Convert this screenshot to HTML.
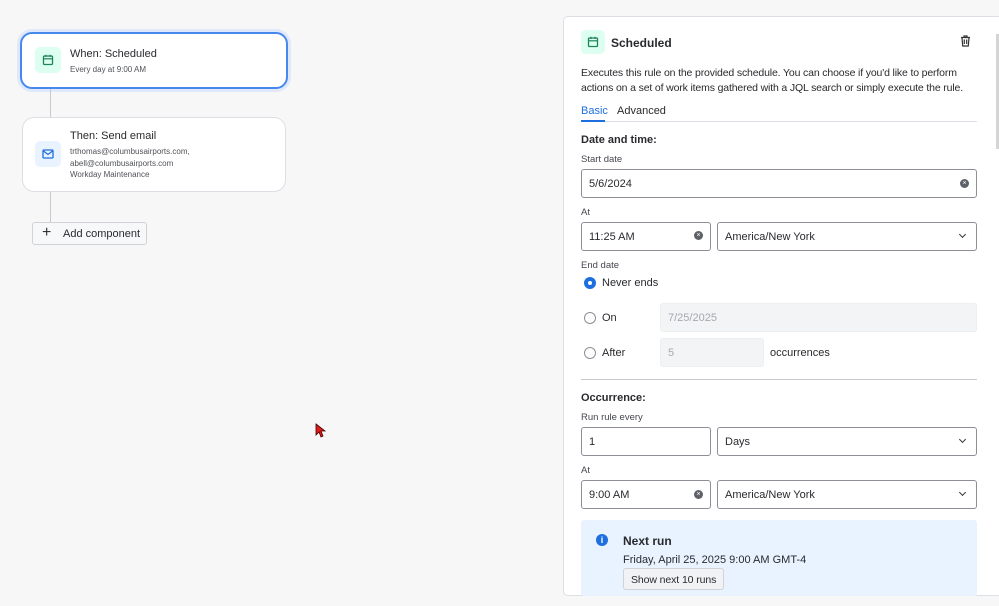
<!DOCTYPE html>
<html><head><style>
*{box-sizing:border-box;margin:0;padding:0}
body{width:999px;height:606px;background:#f7f7f7;font-family:"Liberation Sans",sans-serif;color:#292a2e;position:relative;overflow:hidden;font-size:11px}
div{white-space:nowrap}
.a{position:absolute}
.card{position:absolute;background:#fff;border:1px solid #dcdfe4;border-radius:12px}
.ib{position:absolute;width:26px;height:26px;border-radius:5px;display:flex;align-items:center;justify-content:center}
.inp{position:absolute;border:1px solid #8c8f97;border-radius:3px;background:#fff;font-size:11px;padding-left:7px;display:flex;align-items:center}
.dis{position:absolute;background:#f3f4f5;border:1px solid #eceef0;border-radius:3px;color:#a5a8ad;font-size:11px;padding-left:7px;display:flex;align-items:center}
.lbl{position:absolute;font-size:9.5px;color:#44474f}
.x{position:absolute;width:9px;height:9px;border-radius:50%;background:#5e6168;color:#fff;font-size:7px;line-height:9px;text-align:center}
.chev{position:absolute;width:5px;height:5px;border-right:1.5px solid #333;border-bottom:1.5px solid #333;transform:rotate(45deg)}
.rad{position:absolute;width:12px;height:12px;border:1.5px solid #8c8f97;border-radius:50%;background:#fff}
</style></head><body>
<div class="card" style="left:20px;top:32px;width:268px;height:57px;border:2px solid #4688ec;box-shadow:0 0 0 3px #dfe9fb"></div>
<div class="ib" style="left:35px;top:47px;background:#dcfff1"><svg width="12" height="12" viewBox="0 0 12 12"><rect x="1.5" y="2" width="9" height="8.5" rx="1" fill="none" stroke="#1f845a" stroke-width="1.3"/><line x1="1.5" y1="4.8" x2="10.5" y2="4.8" stroke="#1f845a" stroke-width="1.2"/><line x1="4" y1="0.8" x2="4" y2="3" stroke="#1f845a" stroke-width="1.2"/><line x1="8" y1="0.8" x2="8" y2="3" stroke="#1f845a" stroke-width="1.2"/></svg></div>
<div class="a" style="left:70px;top:48px;font-size:11px">When: Scheduled</div>
<div class="a" style="left:70px;top:65px;font-size:8px;color:#505258">Every day at 9:00 AM</div>
<div class="a" style="left:50px;top:89px;width:1px;height:28px;background:#c8cacf"></div>
<div class="card" style="left:22px;top:117px;width:264px;height:75px"></div>
<div class="ib" style="left:35px;top:141px;background:#e9f2ff"><svg width="12" height="10" viewBox="0 0 12 10"><rect x="1" y="1" width="10" height="8" rx="1" fill="none" stroke="#1d6fe0" stroke-width="1.3"/><path d="M1.5 2 L6 5.5 L10.5 2" fill="none" stroke="#1d6fe0" stroke-width="1.2"/></svg></div>
<div class="a" style="left:70px;top:130px;font-size:11px">Then: Send email</div>
<div class="a" style="left:70px;top:146px;font-size:8px;color:#505258;line-height:11.5px">trthomas@columbusairports.com,<br>abell@columbusairports.com<br>Workday Maintenance</div>
<div class="a" style="left:50px;top:192px;width:1px;height:30px;background:#c8cacf"></div>
<div class="a" style="left:32px;top:222px;width:115px;height:23px;border:1px solid #d0d2d6;background:#f7f8f9;border-radius:3px;font-size:11px;padding:5px 0 0 30px">Add component</div>
<div class="a" style="left:42px;top:225px;font-size:16px;line-height:16px;color:#333">+</div>
<svg class="a" style="left:315px;top:423px" width="12" height="16" viewBox="0 0 12 16"><path d="M1 1 L1 12 L4 9 L6 14 L8 13 L6 8 L10 8 Z" fill="#e01b1b" stroke="#400" stroke-width="0.8"/></svg>

<div class="a" style="left:563px;top:16px;width:440px;height:580px;background:#fff;border:1px solid #dcdfe4;border-radius:5px"></div>
<div class="a" style="left:996px;top:34px;width:3px;height:115px;background:#d5d5d5"></div>
<div class="ib" style="left:581px;top:30px;width:24px;height:24px;background:#dcfff1"><svg width="12" height="12" viewBox="0 0 12 12"><rect x="1.5" y="2" width="9" height="8.5" rx="1" fill="none" stroke="#1f845a" stroke-width="1.3"/><line x1="1.5" y1="4.8" x2="10.5" y2="4.8" stroke="#1f845a" stroke-width="1.2"/><line x1="4" y1="0.8" x2="4" y2="3" stroke="#1f845a" stroke-width="1.2"/><line x1="8" y1="0.8" x2="8" y2="3" stroke="#1f845a" stroke-width="1.2"/></svg></div>
<div class="a" style="left:611px;top:36px;font-size:12px;font-weight:bold">Scheduled</div>
<svg class="a" style="left:960px;top:35px" width="11" height="12" viewBox="0 0 11 12"><path d="M1 2.5 H10 M4 2.5 V1 H7 V2.5 M2 2.5 L2.7 11 H8.3 L9 2.5 M4.3 4.5 V9 M6.7 4.5 V9" fill="none" stroke="#333" stroke-width="1.2"/></svg>
<div class="a" style="left:581px;top:66px;font-size:10.5px;line-height:15px;letter-spacing:-0.15px">Executes this rule on the provided schedule. You can choose if you'd like to perform<br>actions on a set of work items gathered with a JQL search or simply execute the rule.</div>
<div class="a" style="left:581px;top:105px;font-size:11px;color:#1d6fe0">Basic</div>
<div class="a" style="left:617px;top:105px;font-size:11px">Advanced</div>
<div class="a" style="left:581px;top:121px;width:396px;height:1px;background:#dcdfe4"></div>
<div class="a" style="left:581px;top:120px;width:24px;height:2px;background:#1d6fe0"></div>
<div class="a" style="left:581px;top:134px;font-size:11px;font-weight:bold">Date and time:</div>
<div class="lbl" style="left:581px;top:154px">Start date</div>
<div class="inp" style="left:581px;top:169px;width:396px;height:29px">5/6/2024</div>
<div class="x" style="left:960px;top:179px">×</div>
<div class="lbl" style="left:581px;top:207px">At</div>
<div class="inp" style="left:581px;top:222px;width:130px;height:29px">11:25 AM</div>
<div class="x" style="left:694px;top:231px">×</div>
<div class="inp" style="left:717px;top:222px;width:260px;height:29px">America/New York</div>
<div class="chev" style="left:960px;top:232px"></div>
<div class="lbl" style="left:581px;top:260px">End date</div>
<div class="rad" style="left:584px;top:277px;border:4px solid #1d6fe0"></div>
<div class="a" style="left:602px;top:277px;font-size:11px">Never ends</div>
<div class="rad" style="left:584px;top:312px"></div>
<div class="a" style="left:602px;top:312px;font-size:11px">On</div>
<div class="dis" style="left:660px;top:303px;width:317px;height:29px">7/25/2025</div>
<div class="rad" style="left:584px;top:347px"></div>
<div class="a" style="left:602px;top:347px;font-size:11px">After</div>
<div class="dis" style="left:660px;top:338px;width:104px;height:29px">5</div>
<div class="a" style="left:770px;top:347px;font-size:11px">occurrences</div>
<div class="a" style="left:581px;top:379px;width:396px;height:1px;background:#c8cacf"></div>
<div class="a" style="left:581px;top:392px;font-size:11px;font-weight:bold">Occurrence:</div>
<div class="lbl" style="left:581px;top:412px">Run rule every</div>
<div class="inp" style="left:581px;top:427px;width:130px;height:29px">1</div>
<div class="inp" style="left:717px;top:427px;width:260px;height:29px">Days</div>
<div class="chev" style="left:960px;top:437px"></div>
<div class="lbl" style="left:581px;top:465px">At</div>
<div class="inp" style="left:581px;top:480px;width:130px;height:29px">9:00 AM</div>
<div class="x" style="left:694px;top:490px">×</div>
<div class="inp" style="left:717px;top:480px;width:260px;height:29px">America/New York</div>
<div class="chev" style="left:960px;top:490px"></div>
<div class="a" style="left:581px;top:520px;width:396px;height:76px;background:#e9f2ff;border-radius:3px"></div>
<div class="a" style="left:596px;top:534px;width:12px;height:12px;border-radius:50%;background:#1d6fe0;color:#fff;font-size:9px;font-weight:bold;text-align:center;line-height:12px">i</div>
<div class="a" style="left:623px;top:534px;font-size:12px;font-weight:bold">Next run</div>
<div class="a" style="left:623px;top:554px;font-size:11px">Friday, April 25, 2025 9:00 AM GMT-4</div>
<div class="a" style="left:623px;top:568px;width:101px;height:22px;background:#f1f2f4;border:1px solid #d0d2d6;border-radius:3px;font-size:10.5px;padding:5px 0 0 7px;letter-spacing:-0.1px">Show next 10 runs</div>
</body></html>
